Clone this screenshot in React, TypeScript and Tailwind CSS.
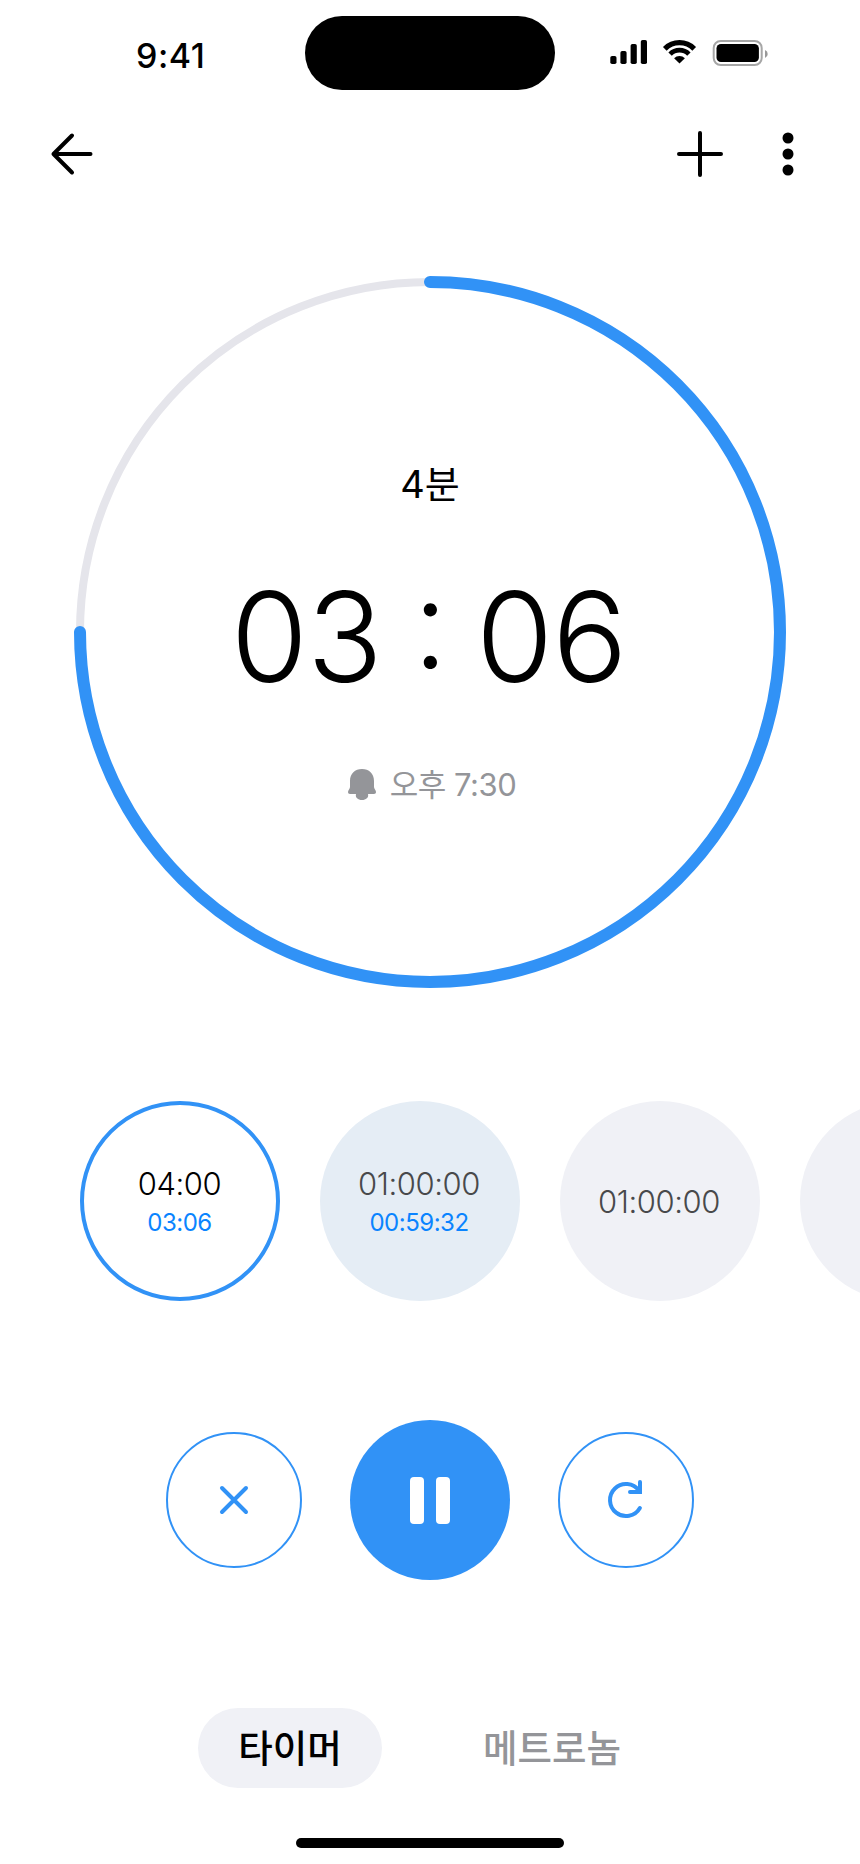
function StatusIcons() {
  return (
    <svg className="block h-[30px] w-[160px]" viewBox="608 38 160 30">
      <rect x="610.3" y="56" width="6.2" height="8" rx="1.8" />
      <rect x="620.4" y="51" width="6.2" height="13" rx="1.8" />
      <rect x="630.6" y="44" width="6.2" height="20" rx="1.8" />
      <rect x="640.8" y="40" width="6.2" height="24" rx="1.8" />
      <g fill="none" stroke="#000">
        <path d="M664.8 48.8A20.8 20.8 0 0 1 694.2 48.8" strokeWidth="5.2" />
        <path d="M670.1 54.1A13.3 13.3 0 0 1 688.9 54.1" strokeWidth="4.8" />
      </g>
      <path d="M679.5 63.5L674.1 58.2A7.5 7.5 0 0 1 684.9 58.2Z" />
      <rect x="713.7" y="41" width="48" height="24" rx="7" fill="none" stroke="#000" strokeOpacity=".35" strokeWidth="2" />
      <rect x="716.5" y="44" width="42.4" height="18" rx="4.5" />
      <path d="M765 50v8a4.3 4.3 0 0 0 0-8z" fillOpacity=".4" />
    </svg>
  );
}

function Header() {
  return (
    <header className="flex h-16 shrink-0 items-center justify-between px-12">
      <svg className="h-12 w-12" viewBox="48 130 48 48" fill="none" stroke="#000" strokeWidth="4" strokeLinecap="round" strokeLinejoin="round">
        <path d="M90.5 154H53.5M72 135.5L53.5 154L72 172.5" />
      </svg>
      <div className="flex gap-10">
        <svg className="h-12 w-12" viewBox="676 130 48 48" fill="none" stroke="#000" strokeWidth="4" strokeLinecap="round">
          <path d="M700 133V175M679 154H721" />
        </svg>
        <svg className="h-12 w-12" viewBox="764 130 48 48">
          <circle cx="788" cy="138" r="5.5" />
          <circle cx="788" cy="154" r="5.5" />
          <circle cx="788" cy="170" r="5.5" />
        </svg>
      </div>
    </header>
  );
}

function Dial() {
  return (
    <section className="mt-[84px] grid h-[724px] shrink-0 justify-center">
      <svg className="col-start-1 row-start-1 h-[724px] w-[724px]" viewBox="68 270 724 724" fill="none">
        <circle cx="430" cy="632" r="350" stroke="#e5e5eb" strokeWidth="8" />
        <path d="M430 282A350 350 0 1 1 80 632" stroke="#3192f6" strokeWidth="12" strokeLinecap="round" />
      </svg>
      <div className="col-start-1 row-start-1 flex flex-col items-center pt-[186px]">
        <p className="h-14 text-[38px] leading-[56px]">4분</p>
        <div className="mt-[45px] flex h-[160px] items-center pr-[3px] text-[125px] font-light leading-[160px] tracking-[-1px]">
          <span>03</span>
          <span className="mb-[28px] ml-[31px] mr-[29px]">:</span>
          <span>06</span>
        </div>
        <p className="mt-[43px] flex h-12 items-center gap-[14px] pl-1 text-[31px] leading-[48px] tracking-[-0.5px] text-[#949599]">
          <svg className="h-[31px] w-7" viewBox="0 0 28 31" fill="currentColor">
            <path d="M14 0C7 0 2 4.6 2 12V18C2 20 0 21 0 23C0 24.2.7 25 2 25H8C7 28.5 10 31 14 31S21 28.5 20 25H26C27.3 25 28 24.2 28 23C28 21 26 20 26 18V12C26 4.6 21 0 14 0Z" />
          </svg>
          <span className="pt-0.5">오후 7:30</span>
        </p>
      </div>
    </section>
  );
}

function Presets() {
  return (
    <section className="mt-[107px] flex shrink-0 gap-10 overflow-hidden pl-20">
      <div className="flex h-50 w-50 shrink-0 flex-col items-center justify-center rounded-full border-4 border-[#3192f6] pr-px pt-px">
        <span className="text-[31px] font-light leading-[42px] tracking-[-0.45px]">04:00</span>
        <span className="text-[24px] leading-[35px] tracking-[-0.5px] text-[#0a84ff]">03:06</span>
      </div>
      <div className="flex h-50 w-50 shrink-0 flex-col items-center justify-center rounded-full bg-[#e5edf5] pr-0.5 pt-px">
        <span className="text-[31px] font-light leading-[42px] tracking-[-0.45px] text-[#48494b]">01:00:00</span>
        <span className="text-[24px] leading-[35px] tracking-[-0.5px] text-[#0a84ff]">00:59:32</span>
      </div>
      <div className="flex h-50 w-50 shrink-0 items-center justify-center rounded-full bg-[#f0f1f6] pr-0.5 pt-0.5">
        <span className="text-[31px] font-light leading-[42px] tracking-[-0.45px] text-[#48494b]">01:00:00</span>
      </div>
      <div className="h-50 w-50 shrink-0 rounded-full bg-[#f0f1f6]" />
    </section>
  );
}

function Controls() {
  return (
    <section className="mt-[119px] flex shrink-0 items-center justify-center gap-12">
      <button className="flex h-[136px] w-[136px] items-center justify-center rounded-full border-2 border-[#3192f6]">
        <svg className="h-12 w-12" viewBox="210 1476 48 48" fill="none" stroke="#3192f6" strokeWidth="4" strokeLinecap="round">
          <path d="M222 1488L246 1512M246 1488L222 1512" />
        </svg>
      </button>
      <button className="flex h-40 w-40 items-center justify-center gap-3 rounded-full bg-[#3192f6]">
        <span className="h-[47px] w-3.5 rounded-[4px] bg-white" />
        <span className="h-[47px] w-3.5 rounded-[4px] bg-white" />
      </button>
      <button className="flex h-[136px] w-[136px] items-center justify-center rounded-full border-2 border-[#3192f6]">
        <svg className="h-12 w-12" viewBox="602 1476 48 48" fill="none" stroke="#3192f6" strokeWidth="4" strokeLinecap="round">
          <path d="M639.9 1508A16 16 0 1 1 639 1490.7" />
          <path d="M640 1482V1492H630" />
        </svg>
      </button>
    </section>
  );
}

export default function App() {
  return (
    <main className="flex h-[1864px] w-[860px] flex-col overflow-hidden bg-white font-['Inter','Noto_Sans_CJK_KR',sans-serif] text-black">
      <div className="flex h-[122px] shrink-0 pt-4">
        <span className="w-[305px] pl-[136px] pt-[19px] text-[34px] font-medium leading-[42px] tracking-[0.5px]">9:41</span>
        <div className="h-[74px] w-[250px] rounded-full bg-black" />
        <div className="pl-[53px] pt-[22px]">
          <StatusIcons />
        </div>
      </div>
      <Header />
      <Dial />
      <Presets />
      <Controls />
      <nav className="mt-[128px] flex h-20 shrink-0 text-[37.5px] font-medium leading-[82px]">
        <span className="ml-[198px] h-20 w-[184px] rounded-full bg-[#f0f1f6] text-center">타이머</span>
        <span className="w-[340px] text-center text-[#949599]">메트로놈</span>
      </nav>
      <div className="mx-auto mt-[50px] h-2.5 w-[268px] shrink-0 rounded-full bg-black" />
    </main>
  );
}
